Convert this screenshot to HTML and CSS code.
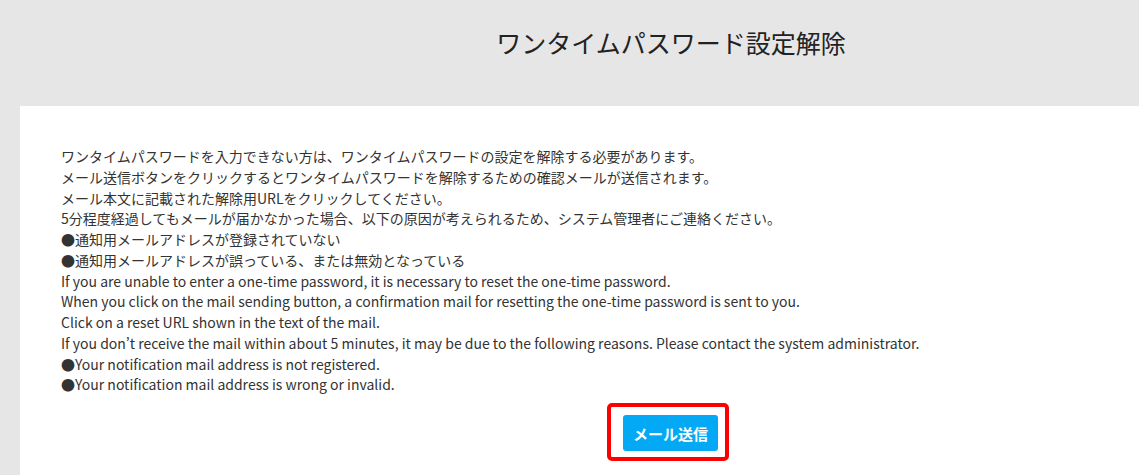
FILE: index.html
```html
<!DOCTYPE html>
<html lang="ja">
<head>
<meta charset="utf-8">
<title>ワンタイムパスワード設定解除</title>
<link rel="stylesheet" href="styles.css">
</head>
<body>
<div class="page">
  <header class="header">
    <h1 class="title">ワンタイムパスワード設定解除</h1>
  </header>
  <main class="panel">
    <div class="message">
      <p>ワンタイムパスワードを入力できない方は、ワンタイムパスワードの設定を解除する必要があります。</p>
      <p>メール送信ボタンをクリックするとワンタイムパスワードを解除するための確認メールが送信されます。</p>
      <p>メール本文に記載された解除用URLをクリックしてください。</p>
      <p>5分程度経過してもメールが届かなかった場合、以下の原因が考えられるため、システム管理者にご連絡ください。</p>
      <p>●通知用メールアドレスが登録されていない</p>
      <p>●通知用メールアドレスが誤っている、または無効となっている</p>
      <p>If you are unable to enter a one-time password, it is necessary to reset the one-time password.</p>
      <p>When you click on the mail sending button, a confirmation mail for resetting the one-time password is sent to you.</p>
      <p>Click on a reset URL shown in the text of the mail.</p>
      <p>If you don’t receive the mail within about 5 minutes, it may be due to the following reasons. Please contact the system administrator.</p>
      <p>●Your notification mail address is not registered.</p>
      <p>●Your notification mail address is wrong or invalid.</p>
    </div>
    <div class="actions">
      <div class="highlight">
        <button class="send-btn" type="button">メール送信</button>
      </div>
    </div>
  </main>
</div>
</body>
</html>
```
FILE: styles.css
```css
html, body {
  margin: 0;
  padding: 0;
  overflow: hidden;
  background: #e6e6e6;
}
.page {
  width: 1342px;
  font-family: "Noto Sans CJK JP", "Noto Sans", sans-serif;
  color: #333;
}
.header {
  height: 106px;
  display: flex;
  justify-content: center;
}
.title {
  margin: 0;
  padding-top: 24px;
  font-size: 25px;
  font-weight: 400;
  line-height: 36px;
  color: #222;
}
.panel {
  margin: 0 20px;
  background: #fff;
  padding: 40px 41px 20px;
  min-height: 400px;
}
.message p {
  margin: 0;
  font-size: 14px;
  line-height: 20.75px;
  color: #333;
  white-space: nowrap;
}
.actions {
  display: flex;
  justify-content: center;
  padding-top: 8px;
}
.highlight {
  border: 4px solid #f00;
  border-radius: 5px;
  padding: 8px 7px 6px 12px;
  margin-right: 6px;
  display: flex;
}
.send-btn {
  background: #03a9f4;
  color: #fff;
  border: none;
  border-radius: 3px;
  width: 95px;
  height: 36px;
  font-family: "Noto Sans CJK JP", sans-serif;
  font-weight: 700;
  font-size: 15px;
  padding: 0;
  cursor: pointer;
}
```
